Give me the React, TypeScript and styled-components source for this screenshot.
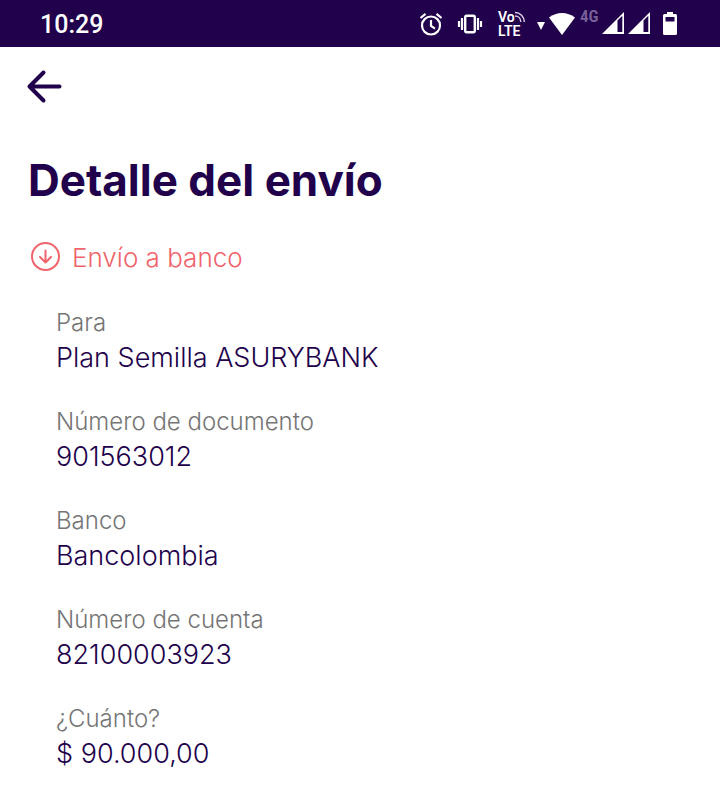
import React from "react";
import styled, { createGlobalStyle } from "styled-components";

const INK = "#21014b";
const CORAL = "#f0646b";

const GlobalStyle = createGlobalStyle`
  * { box-sizing: border-box; }
  body {
    margin: 0;
    background: #fff;
    color: ${INK};
    font-family: Inter, "Open Sans", sans-serif;
  }
`;

const StatusBar = styled.header`
  display: flex;
  align-items: center;
  justify-content: space-between;
  height: 47px;
  padding: 0 43px 0 40px;
  background: ${INK};
  color: #fff;
  font-family: Roboto, sans-serif;
`;

const Clock = styled.time`
  padding-top: 2px;
  font-size: 25px;
  line-height: 32px;
  font-weight: 500;
`;

const StatusIcons = styled.div`
  display: flex;
  align-items: center;
`;

const Icon = styled.svg<{ $before?: number }>`
  display: block;
  flex: none;
  margin-left: ${(p) => p.$before ?? 0}px;
`;

const VoLte = styled.div`
  width: 28px;
  margin-left: 15px;
  font-size: 14px;
  line-height: 14px;
  font-weight: 600;
`;

const VoLine = styled.div`
  display: flex;
`;

const Network = styled.span`
  align-self: flex-start;
  width: 20px;
  margin-left: 5px;
  color: #78619a;
  font-family: "Roboto Condensed", Roboto, sans-serif;
  font-size: 17px;
  line-height: 12px;
  font-weight: 600;
`;

const Screen = styled.main`
  padding: 20px 28px 24px;
`;

const BackButton = styled.button`
  display: flex;
  align-items: center;
  width: 40px;
  height: 40px;
  margin-left: -4px;
  padding: 0;
  border: 0;
  background: none;
  color: ${INK};
  cursor: pointer;
`;

const Title = styled.h1`
  margin: 45px 0 0;
  font-size: 44px;
  line-height: 56px;
  font-weight: 700;
`;

const Kind = styled.p`
  display: flex;
  align-items: center;
  gap: 10px;
  margin: 32px 0 0;
  color: ${CORAL};
  font-size: 26px;
  line-height: 36px;
  font-weight: 300;
`;

const Details = styled.dl`
  display: grid;
  gap: 29px;
  margin: 31px 0 0;
  padding: 0 28px;
`;

const Label = styled.dt`
  color: #757575;
  font-size: 24px;
  line-height: 32px;
  font-weight: 300;
`;

const Value = styled.dd`
  margin: 0;
  font-size: 27px;
  line-height: 38px;
  font-weight: 300;
`;

const details = [
  { label: "Para", value: "Plan Semilla ASURYBANK" },
  { label: "Número de documento", value: "901563012" },
  { label: "Banco", value: "Bancolombia" },
  { label: "Número de cuenta", value: "82100003923" },
  { label: "¿Cuánto?", value: "$ 90.000,00" },
];

function AlarmIcon() {
  return (
    <Icon width="24" height="24" viewBox="0 0 24 24" fill="none" stroke="#fff" strokeWidth="2.2" aria-hidden="true">
      <circle cx="13" cy="13.5" r="9" />
      <path d="M13 8v6l4 2.600M2.500 6l5-4.200M23.500 6l-5-4.200" />
    </Icon>
  );
}

function VibrateIcon() {
  return (
    <Icon $before={15} width="26" height="20" viewBox="0 0 26 20" fill="none" stroke="#fff" aria-hidden="true">
      <rect x="8.2" y="1.7" width="9.6" height="16.6" rx="1.5" strokeWidth="2.4" />
      <path d="M5 4v12M21 4v12M2 7v6M24 7v6" strokeWidth="2.2" />
    </Icon>
  );
}

function WavesIcon() {
  return (
    <Icon width="11" height="14" viewBox="0 0 11 14" fill="none" stroke="#d9d0e6" strokeWidth="1.5" aria-hidden="true">
      <path d="M0 2.500c5 0 9.300 4 9.300 9.500M0 6c3.400 0 5.800 2.400 5.800 6" />
    </Icon>
  );
}

function DataArrowIcon() {
  return (
    <Icon $before={11} width="8" height="12" viewBox="0 0 8 12" fill="#fff" aria-hidden="true">
      <path d="M0 4h8l-4 8z" />
    </Icon>
  );
}

function WifiIcon() {
  return (
    <Icon $before={4} width="26" height="22" viewBox="0 0 26 22" fill="#fff" aria-hidden="true">
      <path d="M0 4.500C7.500-1.500 18.500-1.500 26 4.500L13 22z" />
    </Icon>
  );
}

function SignalIcon({ before }: { before: number }) {
  return (
    <Icon $before={before} width="22" height="24" viewBox="0 0 22 24" aria-hidden="true">
      <path d="M22 0v22H0z" fill="#fff" />
      <path d="M15.500 8.500 20.300 3.800V20h-4.800z" fill={INK} />
    </Icon>
  );
}

function BatteryIcon() {
  return (
    <Icon $before={13} width="14" height="23" viewBox="0 0 14 23" aria-hidden="true">
      <path d="M4 0h6v2h2.500Q14 2 14 3.500v18q0 1.500-1.500 1.500h-11Q0 23 0 21.500v-18Q0 2 1.500 2H4z" fill="#fff" />
      <path d="M2.500 5h9v4.500h-9z" fill={INK} />
    </Icon>
  );
}

export default function App() {
  return (
    <>
      <GlobalStyle />
      <StatusBar>
        <Clock>10:29</Clock>
        <StatusIcons>
          <AlarmIcon />
          <VibrateIcon />
          <VoLte>
            <VoLine>
              Vo
              <WavesIcon />
            </VoLine>
            LTE
          </VoLte>
          <DataArrowIcon />
          <WifiIcon />
          <Network>4G</Network>
          <SignalIcon before={2} />
          <SignalIcon before={4} />
          <BatteryIcon />
        </StatusIcons>
      </StatusBar>
      <Screen>
        <BackButton type="button" aria-label="Volver">
          <svg width="40" height="40" viewBox="0 0 40 40" fill="none" stroke="currentColor" strokeWidth="4" strokeLinecap="round" strokeLinejoin="round" aria-hidden="true">
            <path d="M35.500 19.500H5.500M19.500 5.500l-14 14 14 14" />
          </svg>
        </BackButton>
        <Title>Detalle del envío</Title>
        <Kind>
          <svg width="34" height="34" viewBox="0 0 34 34" fill="none" stroke="currentColor" strokeWidth="2" strokeLinecap="round" strokeLinejoin="round" aria-hidden="true">
            <circle cx="17.500" cy="15.500" r="13.500" />
            <path d="M17.500 9.500v12M12 16l5.500 5.500L23 16" />
          </svg>
          Envío a banco
        </Kind>
        <Details>
          {details.map((d) => (
            <div key={d.label}>
              <Label>{d.label}</Label>
              <Value>{d.value}</Value>
            </div>
          ))}
        </Details>
      </Screen>
    </>
  );
}
